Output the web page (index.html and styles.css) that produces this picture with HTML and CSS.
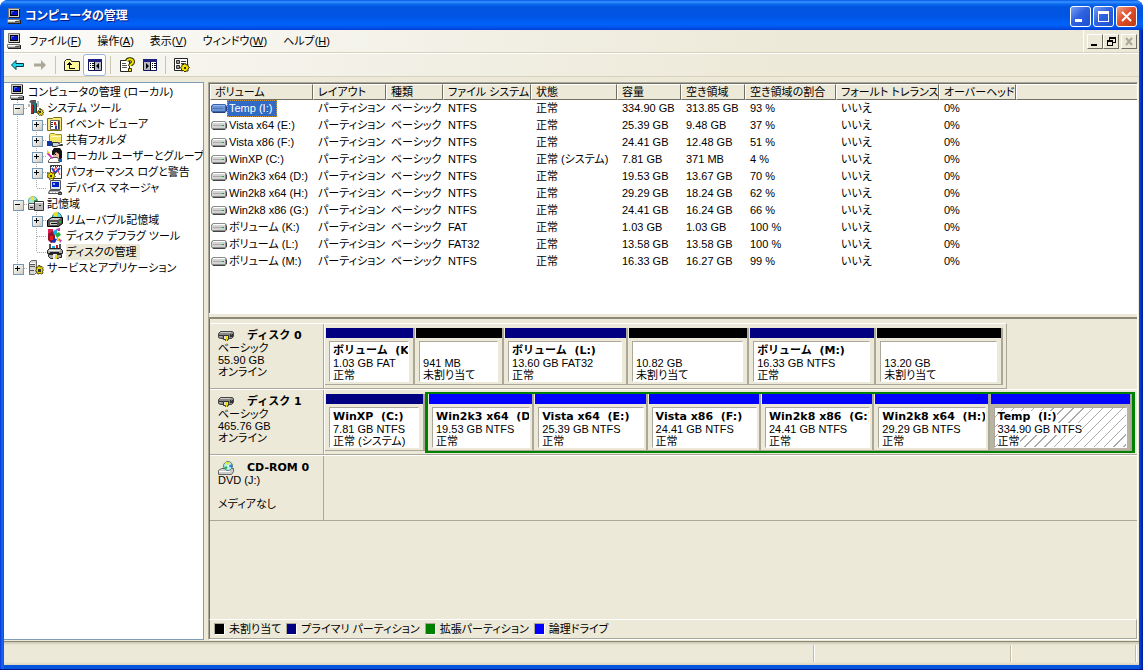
FILE: index.html
```html
<!DOCTYPE html>
<html lang="ja">
<head>
  <meta charset="UTF-8">
  <title>コンピュータの管理</title>
  <link rel="stylesheet" href="styles.css">
</head>
<body>
  <svg class="defs" aria-hidden="true">
    <symbol id="i-pc" viewBox="0 0 16 16">
      <path fill="#d4d0c8" stroke="#777" d="M2.500.500h11v9h-11z"/>
      <path fill="#000" d="M4 2h8v6H4z"/>
      <path fill="#0010c8" d="M5 3h6v4H5z"/>
      <path fill="#3c6cf0" d="M5 3h3v1H6v2H5z"/>
      <path fill="#d4d0c8" stroke="#777" d="M1.500 11.500h12v3h-12z"/>
      <path fill="#222" d="M13 1h1v9H3V9h10zM14 12h1v4H2v-1h12z"/>
      <path fill="#fff" d="M2 12h8v1H2z"/>
      <path fill="#555" d="M9 13h4v1H9z"/>
    </symbol>
    <symbol id="i-tools" viewBox="0 0 16 16">
      <path fill="#555" d="M1 2l2-2h5v3H6v2H3V3z"/>
      <path fill="#c02020" d="M3 5h3v9H3z"/>
      <path fill="#108080" d="M6 3h3v10H6z"/>
      <path fill="#bbb" d="M9 1h2v6H9zM0 4h2v3H0z"/>
      <path fill="#333" d="M5 5h1v9H3v-1h2zM8 4h1v9H8z"/>
      <path fill="#e8d800" stroke="#544800" d="M11.500 8.500h1v1.500l1.500-.500 1 1-.500 1 1 .500v1l-1 .500.500 1-1 1-1.500-.500-1 .500-1-1 .500-1-2-.500v-1l2-.500-.500-1 1-1z"/>
      <path fill="#333" d="M11 11h2v2h-2z"/>
    </symbol>
    <symbol id="i-event" viewBox="0 0 16 16">
      <path fill="#f8e878" stroke="#807010" d="M.500 2.500h5l1-1h8v13H.500z"/>
      <path fill="#fff" stroke="#666" d="M3.500 4.500h9v9h-9z"/>
      <path stroke="#333" d="M4 6.500h2M4 8.500h2M4 10.500h2M9 12V8M11.500 13V5"/>
      <path fill="#e02020" d="M7 6h2v3H7z"/>
      <path fill="#2040d0" d="M8 10h2v3H8z"/>
    </symbol>
    <symbol id="i-share" viewBox="0 0 16 16">
      <path fill="#f4e868" stroke="#98902c" d="M2.500 9.500v-7l1-1h4l1 1h6v8h-12z"/>
      <path fill="#fffbc0" d="M4 4h10v1H4z"/>
      <path fill="#0838a8" d="M0 9h5v5H0z"/>
      <path fill="#c8d4e4" stroke="#333" d="M5.500 10.500h5l3 2h2v1h-4l-2 1h-4z"/>
    </symbol>
    <symbol id="i-users" viewBox="0 0 16 16">
      <path fill="#e8b8a0" d="M6 3h6v9H6z"/>
      <path fill="#111" d="M5 3l2-3h6l2 3v7l-3 1V6L9 4 7 7H5z"/>
      <path fill="#fff" stroke="#555" d="M1.500 12.500l3-3h6l2 3v2h-11z"/>
      <path fill="#d020c0" d="M1 4l5 6-1 1-5-5z"/>
      <path fill="#e8d800" d="M0 2l3 3-1 1-2-2z"/>
      <path fill="#111" d="M8 6h1v1H8zM11 13l3-5 1 1-2 5z"/>
      <path fill="#1060c0" d="M12 11h3v3h-3z"/>
    </symbol>
    <symbol id="i-perf" viewBox="0 0 16 16">
      <path fill="#fff" stroke="#333" d="M3.500 1.500h11v13h-11z"/>
      <path fill="none" stroke="#2040d0" stroke-width="2" d="M5 4l3 5 5-5"/>
      <path fill="none" stroke="#e02020" d="M5 10l4-7 4 8"/>
      <path stroke="#333" stroke-dasharray="1 1" d="M4 2.500h10"/>
      <path fill="#e8d800" stroke="#544800" d="M.500 8.500l2 1 1-2 2 2 2-1v3l1 1-2 1v2l-2-1-2 1-.500-2-2-.500 1-2z"/>
      <path fill="#333" d="M3 11h2v2H3z"/>
    </symbol>
    <symbol id="i-device" viewBox="0 0 16 16">
      <path fill="#d8e4f4" stroke="#555" d="M3.500.500h10v9h-10z"/>
      <path fill="#0020c8" d="M5 2h7v5H5z"/>
      <path fill="#88b4ff" d="M6 3h2v2H6z"/>
      <path fill="#b8bcc8" stroke="#555" d="M2.500 10.500h10l2 3h-13z"/>
      <path stroke="#fff" stroke-dasharray="2 1" d="M3 12.500h8"/>
      <path fill="#888" stroke="#333" d="M11.500 12.500h3v2h-3z"/>
    </symbol>
    <symbol id="i-storage" viewBox="0 0 16 16">
      <circle cx="5" cy="5" r="4.500" fill="#a8e8d8" stroke="#60a090"/>
      <path fill="#f0e040" d="M5 5L2 1l4-1z"/>
      <path fill="#20a040" d="M5 5l4 1V3z"/>
      <path fill="#c8c8c8" stroke="#555" d="M.500 7.500h7v6h-7z"/>
      <path fill="#b8b8b8" stroke="#333" d="M6.500 5.500h9v9h-9z"/>
      <path fill="#fff" d="M7 6h8v1H7zM1 8h5v1H1z"/>
      <path stroke="#222" d="M11 9.500h2M2 11.500h3"/>
    </symbol>
    <symbol id="i-removable" viewBox="0 0 16 16">
      <circle cx="10" cy="5" r="4.500" fill="#60d8e0" stroke="#247080"/>
      <path fill="#e8e020" d="M10 5l-4-2 2-3h3z"/>
      <path fill="#555" stroke="#000" d="M.500 8.500l4-3h11v6l-4 3H.500z"/>
      <path fill="#ccc" d="M2 8l3-2h9l-3 2zM3 10h7v3H3z"/>
      <path fill="#111" d="M4 11h6v1H4z"/>
      <path fill="#20b040" d="M12 9h2v2h-2z"/>
    </symbol>
    <symbol id="i-defrag" viewBox="0 0 16 16">
      <path fill="#e02050" d="M1 1h5v5H1z"/>
      <path fill="#901030" d="M1 6l5-3 2 3v8l-4 1-3-3z"/>
      <path fill="#20a8e0" d="M6 3l4-2v5L7 7z"/>
      <path fill="#20b040" d="M8 6l4-2 2 3-4 3z"/>
      <path fill="#e8d800" d="M10 10h3v3h-3z"/>
      <path fill="#d030c0" d="M9 1l4-1v3h-2zM12 11l3 1-2 3z"/>
      <path fill="#1030c0" d="M6 10l4 1-2 4-3-1z"/>
      <path fill="#e02020" d="M3 8h3v4H3z"/>
    </symbol>
    <symbol id="i-disk" viewBox="0 0 16 16">
      <path fill="#555" d="M2 0h2v5H2zM12 0h2v5h-2z"/>
      <path fill="#20a8e0" d="M5 2h3v3H5z"/>
      <path fill="#c02020" d="M9 1h2v4H9z"/>
      <path fill="#aaa" stroke="#222" d="M.500 6.500l2-2h11l2 2v3H.500z"/>
      <path fill="#eee" d="M2 6h11v1H2z"/>
      <path fill="#aaa" stroke="#222" d="M1.500 10.500h13v3h-2l-1 1h-8l-2-2z"/>
      <path fill="#eee" d="M6 10h4v5H6z"/>
      <path fill="#e8d800" d="M8 11h2v4H8z"/>
      <path fill="#222" d="M3 8h9v1H3z"/>
    </symbol>
    <symbol id="i-service" viewBox="0 0 16 16">
      <path fill="#d8d8d8" stroke="#666" d="M1.500 2.500l2-2h5v12l-2 2h-5z"/>
      <path stroke="#555" d="M2 4.500h5M2 6.500h5M2 10.500h4"/>
      <path fill="#fff" d="M2 3h5v1H2z"/>
      <path fill="#e8d800" stroke="#544800" d="M10.500 5.500h1.500v1.500l2-.500 1 1-.500 1.500 1 1-1 1 .500 2-1.500 1-1.500-1-1 1-2-.500v-1.500l-1.500-1 1-1.500-.500-2 2-.500z"/>
      <path fill="#333" d="M10 9h3v3h-3z"/>
    </symbol>
    <symbol id="i-volume" viewBox="0 0 16 10">
      <path fill="#8c8c8c" d="M2 0h12l2 2v5l-2 2H2L0 7V2z"/>
      <path fill="#d4d4d4" d="M1 2h13v5H1z"/>
      <path fill="#fff" d="M2 1h12v1H2z"/>
      <path fill="#aaa" d="M2 4h9v1H2z"/>
      <path fill="#444" d="M2 8h12v1H2zM15 3h1v4h-1z"/>
      <path fill="#20a040" d="M11 4h2v1h-2z"/>
    </symbol>
    <symbol id="i-volume-on" viewBox="0 0 16 10">
      <path fill="#3c62a8" d="M2 0h12l2 2v5l-2 2H2L0 7V2z"/>
      <path fill="#6c94d4" d="M1 2h13v5H1z"/>
      <path fill="#94b8ec" d="M2 1h12v1H2z"/>
      <path fill="#4c72b8" d="M2 4h10v1H2z"/>
      <path fill="#24407c" d="M2 8h12v1H2zM15 3h1v4h-1z"/>
    </symbol>
    <symbol id="i-hdd" viewBox="0 0 16 12">
      <path fill="#888" stroke="#444" d="M.500 3.500l2-2h12l1 1v4l-2 2H2.500l-2-1z"/>
      <path fill="#c8c8c8" d="M2 3l1-1h11l-2 1z"/>
      <path fill="#333" d="M1 5h10v1H1zM12 4h3v3h-3z"/>
      <path fill="#aaa" d="M1 6h3v1H1z"/>
      <path fill="#ddd" stroke="#333" d="M5.500 5.500h5v4h-1v1h-2v-1h-2z"/>
      <path fill="#e8d800" d="M8 6h1v5H8z"/>
      <path fill="#20a040" d="M13 4h1v1h-1z"/>
    </symbol>
    <symbol id="i-cd" viewBox="0 0 16 14">
      <path fill="#ccc" stroke="#666" d="M.500 9.500l3-2h12v3l-2 3H.500z"/>
      <circle cx="10" cy="5" r="4.500" fill="#b8f0e8" stroke="#508080"/>
      <path fill="#f0e020" d="M10 5L7 1l4 0z"/>
      <path fill="#20b050" d="M10 5l-4 1 2 3z"/>
      <path fill="#3080e0" d="M10 5l4 2V3z"/>
      <circle cx="10" cy="5" r="1" fill="#fff"/>
      <path fill="#fff" d="M1 10h11v1H1z"/>
    </symbol>
  </svg>

  <div class="window">
    <header class="titlebar">
      <svg class="icon"><use href="#i-pc"/></svg>
      <h1>コンピュータの管理</h1>
      <button class="caption" aria-label="最小化"><svg viewBox="0 0 19 19"><path fill="#fff" d="M4 12h7v3H4z"/></svg></button>
      <button class="caption" aria-label="最大化"><svg viewBox="0 0 19 19"><path fill="#fff" fill-rule="evenodd" d="M4 4h11v11H4zM5 7v7h9V7z"/></svg></button>
      <button class="caption close" aria-label="閉じる"><svg viewBox="0 0 19 19"><path stroke="#fff" stroke-width="2" d="M5 5l9 9M14 5l-9 9"/></svg></button>
    </header>

    <nav class="menubar">
      <svg class="icon"><use href="#i-pc"/></svg>
      <button>ファイル(<u>F</u>)</button>
      <button>操作(<u>A</u>)</button>
      <button>表示(<u>V</u>)</button>
      <button>ウィンドウ(<u>W</u>)</button>
      <button>ヘルプ(<u>H</u>)</button>
      <div class="mdi">
        <button aria-label="子ウィンドウの最小化"><svg viewBox="0 0 14 13"><path fill="#000" d="M3 9h6v2H3z"/></svg></button>
        <button aria-label="子ウィンドウを元に戻す"><svg viewBox="0 0 14 13"><path fill="#000" fill-rule="evenodd" d="M5 2h7v6H9v3H3V5h2zM6 4v1h3v2h2V4zM4 7v3h4V7z"/></svg></button>
        <button class="off" aria-label="子ウィンドウを閉じる"><svg viewBox="0 0 14 13"><path stroke="#aca899" stroke-width="2" d="M4 3l6 7M10 3l-6 7"/></svg></button>
      </div>
    </nav>

    <div class="toolbar">
      <button aria-label="戻る"><svg viewBox="0 0 16 16"><path fill="#20d8e8" stroke="#003850" d="M2.500 8L7 3.500v3h7.500v3H7v3z"/></svg></button>
      <button aria-label="進む"><svg viewBox="0 0 16 16"><path fill="#aca899" d="M14 8L9 3v3.500H2v3h7V13z"/></svg></button>
      <span class="sep"></span>
      <button aria-label="1 つ上のレベルへ"><svg viewBox="0 0 16 16"><path fill="#fff89c" stroke="#222" d="M.500 13.500v-9l2-2h4l1 2h8v9z"/><path fill="none" stroke="#000" d="M5.500 7v4.500H11"/><path fill="#000" d="M5 5h1v1h1v1h1v1H3V7h1V6h1z"/></svg></button>
      <button class="pressed" aria-label="コンソール ツリーの表示"><svg viewBox="0 0 16 16"><path fill="#fff" stroke="#101060" d="M1.500 2.500h13v11h-13z"/><path fill="#202080" d="M1 2h14v3H1z"/><path fill="#b8b8c8" d="M8 5h6v8H8z"/><path fill="#000" d="M3 6h1v1H3zM5 6h2v1H5zM3 8h1v1H3zM5 8h2v1H5zM3 10h1v1H3zM5 10h2v1H5zM7 5h1v8H7zM12 6v6L9 9z"/></svg></button>
      <span class="sep"></span>
      <button aria-label="ヘルプ"><svg viewBox="0 0 16 16"><path fill="#fff" stroke="#222" d="M1.500 3.500h9v11h-9z"/><path stroke="#555" d="M3 6.500h4M3 8.500h5M3 10.500h5"/><path fill="none" stroke="#333000" stroke-width="4" d="M8 4c1-3 6-2 6 1 0 2-3 2-3 4"/><path fill="none" stroke="#f4e400" stroke-width="2" d="M8 4c1-3 6-2 6 1 0 2-3 2-3 4"/><path fill="#f4e400" stroke="#333000" d="M9.500 11.500h3v3h-3z"/></svg></button>
      <button aria-label="操作ウィンドウの表示"><svg viewBox="0 0 16 16"><path fill="#fff" stroke="#101060" d="M1.500 2.500h13v11h-13z"/><path fill="#202080" d="M1 2h14v3H1z"/><path fill="#b8b8c8" d="M2 5h6v8H2z"/><path fill="#000" d="M10 6h1v1h-1zM12 6h2v1h-2zM10 8h1v1h-1zM12 8h2v1h-2zM10 10h1v1h-1zM12 10h2v1h-2zM8 5h1v8H8zM4 6v6l3-3z"/></svg></button>
      <span class="sep"></span>
      <button aria-label="設定"><svg viewBox="0 0 16 16"><path fill="#fff" stroke="#222" d="M.500 1.500h13v12H.500z"/><path fill="#999" stroke="#333" d="M2.500 3.500h3v3h-3zM2.500 8.500h3v3h-3z"/><path stroke="#333" d="M7 4.500h5M7 6.500h3"/><path fill="#f4e400" stroke="#333000" d="M10.500 6.500h1l.500 1.500 2-.500v2l1.500 1-1.500 1.500v2h-2l-1 1-1.500-1.500-2 .500v-2l-1-1.500 1.500-1v-2h2z"/><path fill="#333" d="M10 10h2v2h-2z"/></svg></button>
    </div>

    <main class="content">
      <aside class="tree">
        <ul>
          <li>
            <a href="#" class="node"><svg class="icon"><use href="#i-pc"/></svg><span>コンピュータの管理 (ローカル)</span></a>
            <ul>
              <li>
                <a href="#" class="node"><i class="box minus"></i><svg class="icon"><use href="#i-tools"/></svg><span>システム ツール</span></a>
                <ul>
                  <li><a href="#" class="node"><i class="box plus"></i><svg class="icon"><use href="#i-event"/></svg><span>イベント ビューア</span></a></li>
                  <li><a href="#" class="node"><i class="box plus"></i><svg class="icon"><use href="#i-share"/></svg><span>共有フォルダ</span></a></li>
                  <li><a href="#" class="node"><i class="box plus"></i><svg class="icon"><use href="#i-users"/></svg><span>ローカル ユーザーとグループ</span></a></li>
                  <li><a href="#" class="node"><i class="box plus"></i><svg class="icon"><use href="#i-perf"/></svg><span>パフォーマンス ログと警告</span></a></li>
                  <li><a href="#" class="node"><i class="box"></i><svg class="icon"><use href="#i-device"/></svg><span>デバイス マネージャ</span></a></li>
                </ul>
              </li>
              <li>
                <a href="#" class="node"><i class="box minus"></i><svg class="icon"><use href="#i-storage"/></svg><span>記憶域</span></a>
                <ul>
                  <li><a href="#" class="node"><i class="box plus"></i><svg class="icon"><use href="#i-removable"/></svg><span>リムーバブル記憶域</span></a></li>
                  <li><a href="#" class="node"><i class="box"></i><svg class="icon"><use href="#i-defrag"/></svg><span>ディスク デフラグ ツール</span></a></li>
                  <li><a href="#" class="node current"><i class="box"></i><svg class="icon"><use href="#i-disk"/></svg><span>ディスクの管理</span></a></li>
                </ul>
              </li>
              <li><a href="#" class="node"><i class="box plus"></i><svg class="icon"><use href="#i-service"/></svg><span>サービスとアプリケーション</span></a></li>
            </ul>
          </li>
        </ul>
      </aside>

      <section class="pane">
        <div class="list">
          <table>
            <colgroup>
              <col class="c-name"><col class="c-layout"><col class="c-type"><col class="c-fs"><col class="c-state">
              <col class="c-size"><col class="c-size"><col class="c-rate"><col class="c-fault"><col class="c-over"><col>
            </colgroup>
            <thead>
              <tr><th>ボリューム</th><th>レイアウト</th><th>種類</th><th>ファイル システム</th><th>状態</th><th>容量</th><th>空き領域</th><th>空き領域の割合</th><th>フォールト トレランス</th><th>オーバーヘッド</th><th></th></tr>
            </thead>
            <tbody>
              <tr class="selected"><td><svg><use href="#i-volume-on"/></svg><span>Temp (I:)</span></td><td>パーティション</td><td>ベーシック</td><td>NTFS</td><td>正常</td><td>334.90 GB</td><td>313.85 GB</td><td>93 %</td><td>いいえ</td><td>0%</td><td></td></tr>
              <tr><td><svg><use href="#i-volume"/></svg><span>Vista x64 (E:)</span></td><td>パーティション</td><td>ベーシック</td><td>NTFS</td><td>正常</td><td>25.39 GB</td><td>9.48 GB</td><td>37 %</td><td>いいえ</td><td>0%</td><td></td></tr>
              <tr><td><svg><use href="#i-volume"/></svg><span>Vista x86 (F:)</span></td><td>パーティション</td><td>ベーシック</td><td>NTFS</td><td>正常</td><td>24.41 GB</td><td>12.48 GB</td><td>51 %</td><td>いいえ</td><td>0%</td><td></td></tr>
              <tr><td><svg><use href="#i-volume"/></svg><span>WinXP (C:)</span></td><td>パーティション</td><td>ベーシック</td><td>NTFS</td><td>正常 (システム)</td><td>7.81 GB</td><td>371 MB</td><td>4 %</td><td>いいえ</td><td>0%</td><td></td></tr>
              <tr><td><svg><use href="#i-volume"/></svg><span>Win2k3 x64 (D:)</span></td><td>パーティション</td><td>ベーシック</td><td>NTFS</td><td>正常</td><td>19.53 GB</td><td>13.67 GB</td><td>70 %</td><td>いいえ</td><td>0%</td><td></td></tr>
              <tr><td><svg><use href="#i-volume"/></svg><span>Win2k8 x64 (H:)</span></td><td>パーティション</td><td>ベーシック</td><td>NTFS</td><td>正常</td><td>29.29 GB</td><td>18.24 GB</td><td>62 %</td><td>いいえ</td><td>0%</td><td></td></tr>
              <tr><td><svg><use href="#i-volume"/></svg><span>Win2k8 x86 (G:)</span></td><td>パーティション</td><td>ベーシック</td><td>NTFS</td><td>正常</td><td>24.41 GB</td><td>16.24 GB</td><td>66 %</td><td>いいえ</td><td>0%</td><td></td></tr>
              <tr><td><svg><use href="#i-volume"/></svg><span>ボリューム (K:)</span></td><td>パーティション</td><td>ベーシック</td><td>FAT</td><td>正常</td><td>1.03 GB</td><td>1.03 GB</td><td>100 %</td><td>いいえ</td><td>0%</td><td></td></tr>
              <tr><td><svg><use href="#i-volume"/></svg><span>ボリューム (L:)</span></td><td>パーティション</td><td>ベーシック</td><td>FAT32</td><td>正常</td><td>13.58 GB</td><td>13.58 GB</td><td>100 %</td><td>いいえ</td><td>0%</td><td></td></tr>
              <tr><td><svg><use href="#i-volume"/></svg><span>ボリューム (M:)</span></td><td>パーティション</td><td>ベーシック</td><td>NTFS</td><td>正常</td><td>16.33 GB</td><td>16.27 GB</td><td>99 %</td><td>いいえ</td><td>0%</td><td></td></tr>
            </tbody>
          </table>
        </div>

        <div class="splitter"></div>

        <div class="graph">
          <div class="disk short">
            <div class="info">
              <h2><svg class="icon"><use href="#i-hdd"/></svg>ディスク 0</h2>
              <p>ベーシック</p><p>55.90 GB</p><p>オンライン</p>
            </div>
            <div class="strip disk0">
              <div class="part primary"><div class="text"><b>ボリューム  (K:)</b><p>1.03 GB FAT</p><p>正常</p></div></div>
              <div class="part free"><div class="text"><b></b><p>941 MB</p><p>未割り当て</p></div></div>
              <div class="part primary"><div class="text"><b>ボリューム  (L:)</b><p>13.60 GB FAT32</p><p>正常</p></div></div>
              <div class="part free"><div class="text"><b></b><p>10.82 GB</p><p>未割り当て</p></div></div>
              <div class="part primary"><div class="text"><b>ボリューム  (M:)</b><p>16.33 GB NTFS</p><p>正常</p></div></div>
              <div class="part free"><div class="text"><b></b><p>13.20 GB</p><p>未割り当て</p></div></div>
            </div>
          </div>
          <div class="disk">
            <div class="info">
              <h2><svg class="icon"><use href="#i-hdd"/></svg>ディスク 1</h2>
              <p>ベーシック</p><p>465.76 GB</p><p>オンライン</p>
            </div>
            <div class="strip disk1">
              <div class="part primary"><div class="text"><b>WinXP  (C:)</b><p>7.81 GB NTFS</p><p>正常 (システム)</p></div></div>
              <div class="extended">
                <div class="part logical"><div class="text"><b>Win2k3 x64  (D:)</b><p>19.53 GB NTFS</p><p>正常</p></div></div>
                <div class="part logical"><div class="text"><b>Vista x64  (E:)</b><p>25.39 GB NTFS</p><p>正常</p></div></div>
                <div class="part logical"><div class="text"><b>Vista x86  (F:)</b><p>24.41 GB NTFS</p><p>正常</p></div></div>
                <div class="part logical"><div class="text"><b>Win2k8 x86  (G:)</b><p>24.41 GB NTFS</p><p>正常</p></div></div>
                <div class="part logical"><div class="text"><b>Win2k8 x64  (H:)</b><p>29.29 GB NTFS</p><p>正常</p></div></div>
                <div class="part logical active"><div class="text"><b>Temp  (I:)</b><p>334.90 GB NTFS</p><p>正常</p></div></div>
              </div>
            </div>
          </div>
          <div class="disk">
            <div class="info">
              <h2><svg class="icon"><use href="#i-cd"/></svg>CD-ROM 0</h2>
              <p>DVD (J:)</p><p></p><p>メディアなし</p>
            </div>
          </div>
        </div>

        <ul class="legend">
          <li><i class="key free"></i>未割り当て</li>
          <li><i class="key primary"></i>プライマリ パーティション</li>
          <li><i class="key ext"></i>拡張パーティション</li>
          <li><i class="key logical"></i>論理ドライブ</li>
        </ul>
      </section>
    </main>

    <footer class="status"><span></span><span></span><span></span></footer>
  </div>
</body>
</html>
```
FILE: styles.css
```css
* {
  box-sizing: border-box;
}
body {
  margin: 0;
  background: #fff;
  color: #000;
  font: 11px/16px "Liberation Sans", "Noto Sans CJK JP", sans-serif;
  font-feature-settings: "palt";
}
h1, h2, p, ul {
  margin: 0;
  padding: 0;
}
ul {
  list-style: none;
}
button {
  padding: 0;
  border: 0;
  background: none;
  color: inherit;
  font: inherit;
  font-feature-settings: inherit;
}
svg {
  display: block;
  flex: none;
}
.defs {
  display: none;
}
.icon {
  width: 16px;
  height: 16px;
}

/* window frame */
.window {
  display: flex;
  flex-direction: column;
  height: 100vh;
  padding: 0 4px 4px;
  background: linear-gradient(90deg, #0831d9, #166aee 2px, #0855dd 4px, #0855dd calc(100% - 4px), #0046e0 calc(100% - 3px), #001590);
  border-bottom: 1px solid #00138c;
  border-radius: 8px 8px 0 0;
}
.titlebar {
  display: flex;
  align-items: center;
  gap: 2px;
  height: 30px;
  margin: 0 -4px;
  padding: 2px 6px 0;
  border-radius: 8px 8px 0 0;
  background: linear-gradient(#0058e6, #3a93ff 2px, #0a6aee 4px, #0055e0 7px, #0054e3 16px, #0062fa 24px, #0056ec 27px, #003dd7);
}
.titlebar h1 {
  flex: 1;
  padding-left: 1px;
  color: #fff;
  font-size: 12px;
  line-height: 20px;
  text-shadow: 1px 1px #0a1883;
}
.caption {
  width: 21px;
  height: 21px;
  border: 1px solid #fff;
  border-radius: 3px;
  background: linear-gradient(135deg, #7a9ff0, #2f62e0 45%, #1c50d0);
}
.caption.close {
  background: linear-gradient(135deg, #f0a088, #e0502c 45%, #c03810);
}

/* menu and toolbar */
.menubar {
  display: flex;
  align-items: center;
  gap: 16px;
  height: 23px;
  padding-left: 2px;
  background: linear-gradient(90deg, #fbfbf9, #ece9d8 70%);
  border-bottom: 1px solid #d8d2bd;
}
.menubar .icon {
  margin-right: -9px;
}
.mdi {
  display: flex;
  align-self: stretch;
  align-items: center;
  margin-left: auto;
  padding: 0 2px 0 3px;
  border-left: 1px solid #fff;
}
.mdi button {
  width: 16px;
  height: 15px;
  border: 1px solid;
  border-color: #fff #716f64 #716f64 #fff;
}
.mdi .off {
  margin-left: 2px;
}
.toolbar {
  display: flex;
  align-items: center;
  height: 24px;
  padding-left: 1px;
  background: linear-gradient(90deg, #f8f7f3, #ece9d8 70%);
  border-top: 1px solid #fff;
  border-bottom: 1px solid #d8d2bd;
}
.toolbar button {
  display: flex;
  align-items: center;
  justify-content: center;
  width: 23px;
  height: 22px;
}
.toolbar svg {
  width: 16px;
  height: 16px;
}
.toolbar .pressed {
  border: 1px solid #98b5e2;
  border-radius: 3px;
  background: #fff;
}
.sep {
  width: 1px;
  height: 18px;
  margin: 0 4px;
  background: #c9c5b2;
}

/* left tree */
.content {
  flex: 1;
  display: flex;
  gap: 4px;
  min-height: 0;
  padding: 5px 1px 1px 0;
  background: #ece9d8;
}
.tree {
  flex: none;
  width: 200px;
  overflow: hidden;
  padding: 1px 0 0 5px;
  background: #fff;
  border: 1px solid #7f9db9;
  border-left: 0;
}
.tree ul ul {
  margin-left: 4px;
  background: repeating-linear-gradient(#a8a8a8 0 1px, #fff 1px 2px) 4px 0 / 1px calc(100% - 8px) no-repeat;
}
.tree ul ul ul {
  margin-left: 19px;
}
.node {
  display: flex;
  align-items: center;
  height: 16px;
  color: #000;
  text-decoration: none;
  white-space: nowrap;
}
.node span {
  margin-left: 3px;
  padding-right: 4px;
}
.current span {
  background: #ece9d8;
}
.box {
  flex: none;
  width: 15px;
  height: 9px;
  background: repeating-linear-gradient(90deg, #a8a8a8 0 1px, transparent 1px 2px) 5px 4px / 10px 1px no-repeat;
}
.box.plus::before,
.box.minus::before {
  content: "";
  display: block;
  width: 9px;
  height: 9px;
  border: 1px solid #7898b5;
  background: linear-gradient(#000, #000) 1px 3px / 5px 1px no-repeat, linear-gradient(135deg, #fff, #d0ccc0);
}
.box.plus::before {
  background: linear-gradient(#000, #000) 1px 3px / 5px 1px no-repeat, linear-gradient(#000, #000) 3px 1px / 1px 5px no-repeat, linear-gradient(135deg, #fff, #d0ccc0);
}

/* volume list */
.pane {
  flex: 1;
  display: flex;
  flex-direction: column;
  min-width: 0;
  border: 1px solid;
  border-color: #aca899 #fff #fff #aca899;
}
.list {
  height: 230px;
  overflow: hidden;
  background: #fff;
  border-top: 1px solid #716f64;
  border-left: 1px solid #716f64;
}
table {
  width: 100%;
  table-layout: fixed;
  border-collapse: separate;
  border-spacing: 0;
}
.c-name { width: 103px; }
.c-layout { width: 73px; }
.c-type { width: 57px; }
.c-fs { width: 88px; }
.c-state { width: 86px; }
.c-size { width: 64px; }
.c-rate { width: 91px; }
.c-fault { width: 103px; }
.c-over { width: 77px; }
th {
  height: 16px;
  padding: 0 0 0 4px;
  overflow: hidden;
  background: #ece9d8;
  border: 1px solid;
  border-color: #fff #716f64 #716f64 #fff;
  font-weight: normal;
  line-height: 14px;
  text-align: left;
  white-space: nowrap;
}
th:last-child {
  border-right: 0;
}
td {
  height: 17px;
  padding: 0 0 0 5px;
  line-height: 17px;
  white-space: nowrap;
}
td:first-child {
  display: flex;
  align-items: center;
  padding-left: 1px;
}
td svg {
  width: 16px;
  height: 10px;
}
td span {
  padding: 0 5px 0 2px;
}
.selected span {
  background: #316ac5;
  color: #fff;
  outline: 1px dotted #ce953a;
  outline-offset: -1px;
}
.splitter {
  height: 6px;
  background: #ece9d8;
  border-top: 1px solid #fff;
  border-bottom: 2px solid #8c8979;
}

/* graphical view */
.graph {
  flex: 1;
  padding-top: 4px;
  border-left: 1px solid #716f64;
}
.disk {
  display: flex;
  height: 66px;
  border-top: 1px solid #fff;
  border-bottom: 1px solid #aca899;
}
.disk.short {
  width: 86%;
  border-right: 1px solid #aca899;
}
.info {
  flex: none;
  width: 114px;
  padding: 6px 0 0 8px;
  border-right: 1px solid #aca899;
  line-height: 12px;
}
.info h2 {
  display: flex;
  align-items: center;
  gap: 13px;
  height: 12px;
  font: bold 11px/12px "DejaVu Sans", "Noto Sans CJK JP", sans-serif;
}
.info .icon {
  height: 14px;
}
.info p {
  height: 12px;
}
.strip {
  flex: 1;
  display: grid;
  min-width: 0;
  border-left: 1px solid #fff;
}
.disk0 {
  grid-template-columns: 90fr 89fr 124fr 121fr 127fr 127fr;
  padding: 4px 3px 3px 0;
}
.disk1 {
  grid-template-columns: 100fr 710fr;
  padding: 2px 2px 1px 0;
}
.disk1 > .part {
  margin: 2px 0;
}
.extended {
  display: grid;
  grid-template-columns: 106fr 113fr 113fr 113fr 115fr 142fr;
  min-width: 0;
  border: solid #008000;
  border-width: 2px 3px;
}
.part {
  display: flex;
  flex-direction: column;
  min-width: 0;
  padding-left: 1px;
  border-right: 2px solid #aca899;
  border-bottom: 1px solid #aca899;
}
.part::before {
  content: "";
  height: 10px;
  flex: none;
}
.primary::before { background: #000080; }
.free::before { background: #000; }
.logical::before { background: #00f; }
.text {
  flex: 1;
  margin: 3px 4px 2px 3px;
  padding: 3px 0 0 3px;
  overflow: hidden;
  background: #fff;
  border: 1px solid;
  border-color: #aca899 #fff #fff #aca899;
  line-height: 12px;
  white-space: nowrap;
}
.text b {
  display: block;
  height: 12px;
  font: bold 11px/12px "DejaVu Sans", "Noto Sans CJK JP", sans-serif;
  white-space: pre;
}
.extended .text {
  margin-right: 2px;
}
.active {
  background: #b8b4a4;
}
.extended .active .text {
  margin-right: 3px;
  background: repeating-linear-gradient(135deg, #fff 0 6px, #aaa 6px 7px);
}
.active b,
.active p {
  width: fit-content;
  background: #fff;
}

/* legend */
.legend {
  display: flex;
  gap: 5px;
  height: 20px;
  padding: 0 4px;
  border: 1px solid;
  border-color: #fff #aca899 #aca899 #716f64;
}
.legend li {
  display: flex;
  align-items: center;
  gap: 4px;
}
.key {
  width: 11px;
  height: 12px;
  border: 1px solid;
  border-color: #aca899 #fff #fff #aca899;
}
.key.free { background: #000; }
.key.primary { background: #000080; }
.key.ext { background: #008000; }
.key.logical { background: #00f; }

.status {
  display: grid;
  grid-template-columns: 809fr 197fr 125fr;
  height: 24px;
  padding: 3px 3px 3px 0;
  background: linear-gradient(#c9c5b2, #ece9d8 3px, #ece9d8 20px, #d8d4c0);
  border-top: 1px solid #8c8979;
}
.status span {
  border-right: 1px solid #c0bca8;
  box-shadow: 1px 0 #fff;
}
```
